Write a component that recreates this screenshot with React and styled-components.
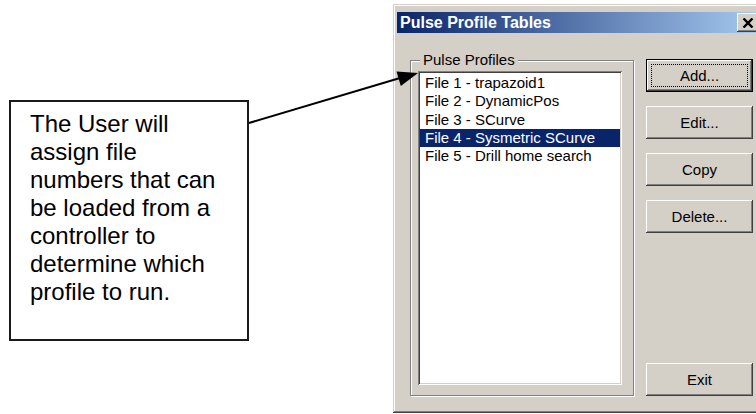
import React from 'react';
import styled, { createGlobalStyle } from 'styled-components';

const GlobalStyle = createGlobalStyle`
  html, body {
    margin: 0;
    padding: 0;
    background: #fff;
    overflow: hidden;
  }
  body {
    font-family: "Liberation Sans", Arial, sans-serif;
  }
`;

const Page = styled.div`
  position: relative;
  display: flex;
  align-items: flex-start;
  width: 756px;
  height: 414px;
  overflow: hidden;
  background: #fff;
`;

const Note = styled.div`
  box-sizing: border-box;
  flex-shrink: 0;
  width: 240px;
  height: 241px;
  margin: 100px 0 0 9px;
  padding: 8px 22px 0 19px;
  border: 2px solid #1a1a1a;
  font-size: 24px;
  line-height: normal;
  color: #000;
`;

const Pointer = styled.svg`
  position: absolute;
  left: 0;
  top: 0;
  pointer-events: none;
`;

const Dialog = styled.div`
  box-sizing: border-box;
  flex-shrink: 0;
  display: flex;
  flex-direction: column;
  width: 372px;
  height: 409px;
  margin: 4px 0 0 144px;
  padding: 8px 4px 4px 4px;
  background: #d4d0c8;
  box-shadow: inset -1px -1px #404040, inset 1px 1px #d4d0c8,
    inset -2px -2px #808080, inset 2px 2px #fff;
`;

const TitleBar = styled.div`
  display: flex;
  align-items: center;
  height: 21px;
  padding-left: 3px;
  background: linear-gradient(to right, #0a246a, #a6caf0);
`;

const Title = styled.span`
  font-size: 16px;
  font-weight: bold;
  line-height: 21px;
  color: #fff;
`;

const CloseButton = styled.div`
  display: flex;
  align-items: center;
  justify-content: center;
  width: 22px;
  height: 19px;
  margin-left: auto;
  margin-right: 2px;
  background: #d4d0c8;
  box-shadow: inset -1px -1px #404040, inset 1px 1px #fff,
    inset -2px -2px #808080, inset 2px 2px #d4d0c8;
`;

const DialogBody = styled.div`
  display: flex;
  gap: 12px;
  padding: 27px 8px 0 13px;
`;

const GroupBox = styled.div`
  position: relative;
  box-sizing: border-box;
  display: flex;
  flex-direction: column;
  width: 224px;
  height: 336px;
  padding: 10px 11px 10px 7px;
  border: 1px solid #808080;
  box-shadow: inset 1px 1px #fff, 1px 1px #fff;
`;

const GroupLabel = styled.span`
  position: absolute;
  top: -10px;
  left: 9px;
  padding: 0 3px;
  background: #d4d0c8;
  font-size: 15px;
  line-height: 18px;
  color: #000;
`;

const ListBox = styled.div`
  flex: 1;
  padding: 3px 2px 2px 2px;
  background: #fff;
  box-shadow: inset 1px 1px #808080, inset -1px -1px #fff,
    inset 2px 2px #404040, inset -2px -2px #d4d0c8;
`;

const Row = styled.div`
  height: 18.3px;
  padding-left: 5px;
  font-size: 15px;
  line-height: 18.3px;
  white-space: nowrap;
  color: ${(p) => (p.$selected ? '#fff' : '#000')};
  background: ${(p) => (p.$selected ? '#0a246a' : 'transparent')};
`;

const ButtonColumn = styled.div`
  display: flex;
  flex-direction: column;
  gap: 14px;
  width: 107px;
  height: 337px;
  margin-top: -1px;
`;

const DlgButton = styled.button`
  position: relative;
  height: 33px;
  margin-top: ${(p) => (p.$bottom ? 'auto' : '0')};
  padding: 0;
  border: none;
  background: #d4d0c8;
  font-family: "Liberation Sans", Arial, sans-serif;
  font-size: 15px;
  color: #000;
  box-shadow: ${(p) => (p.$default
    ? 'inset 0 0 0 1px #000, inset -2px -2px #404040, inset 2px 2px #fff, inset -3px -3px #808080, inset 3px 3px #d4d0c8'
    : 'inset -1px -1px #404040, inset 1px 1px #fff, inset -2px -2px #808080, inset 2px 2px #d4d0c8')};

  &::after {
    content: '';
    display: ${(p) => (p.$default ? 'block' : 'none')};
    position: absolute;
    inset: 5px;
    border: 1px dotted #000;
  }
`;

const profiles = [
  'File 1 - trapazoid1',
  'File 2 - DynamicPos',
  'File 3 - SCurve',
  'File 4 - Sysmetric SCurve',
  'File 5 - Drill home search',
];

const App = () => (
  <>
    <GlobalStyle />
    <Page>
      <Note>
        The User will assign file numbers that can be loaded from a controller
        to determine which profile to run.
      </Note>

      <Dialog>
        <TitleBar>
          <Title>Pulse Profile Tables</Title>
          <CloseButton>
            <svg width="12" height="10" viewBox="0 0 12 10">
              <path d="M1.5 0.5 L10.5 9.5 M10.5 0.5 L1.5 9.5" stroke="#000" strokeWidth="2.4" />
            </svg>
          </CloseButton>
        </TitleBar>
        <DialogBody>
          <GroupBox>
            <GroupLabel>Pulse Profiles</GroupLabel>
            <ListBox>
              {profiles.map((name, i) => (
                <Row key={name} $selected={i === 3}>{name}</Row>
              ))}
            </ListBox>
          </GroupBox>
          <ButtonColumn>
            <DlgButton type="button" $default>Add...</DlgButton>
            <DlgButton type="button">Edit...</DlgButton>
            <DlgButton type="button">Copy</DlgButton>
            <DlgButton type="button">Delete...</DlgButton>
            <DlgButton type="button" $bottom>Exit</DlgButton>
          </ButtonColumn>
        </DialogBody>
      </Dialog>

      {/* callout arrow from the note to the list */}
      <Pointer width="756" height="414" viewBox="0 0 756 414">
        <line x1="249" y1="123" x2="400" y2="78" stroke="#000" strokeWidth="2" />
        <polygon points="418,73 400.8,86 396.5,71.5" fill="#000" />
      </Pointer>
    </Page>
  </>
);

export default App;
